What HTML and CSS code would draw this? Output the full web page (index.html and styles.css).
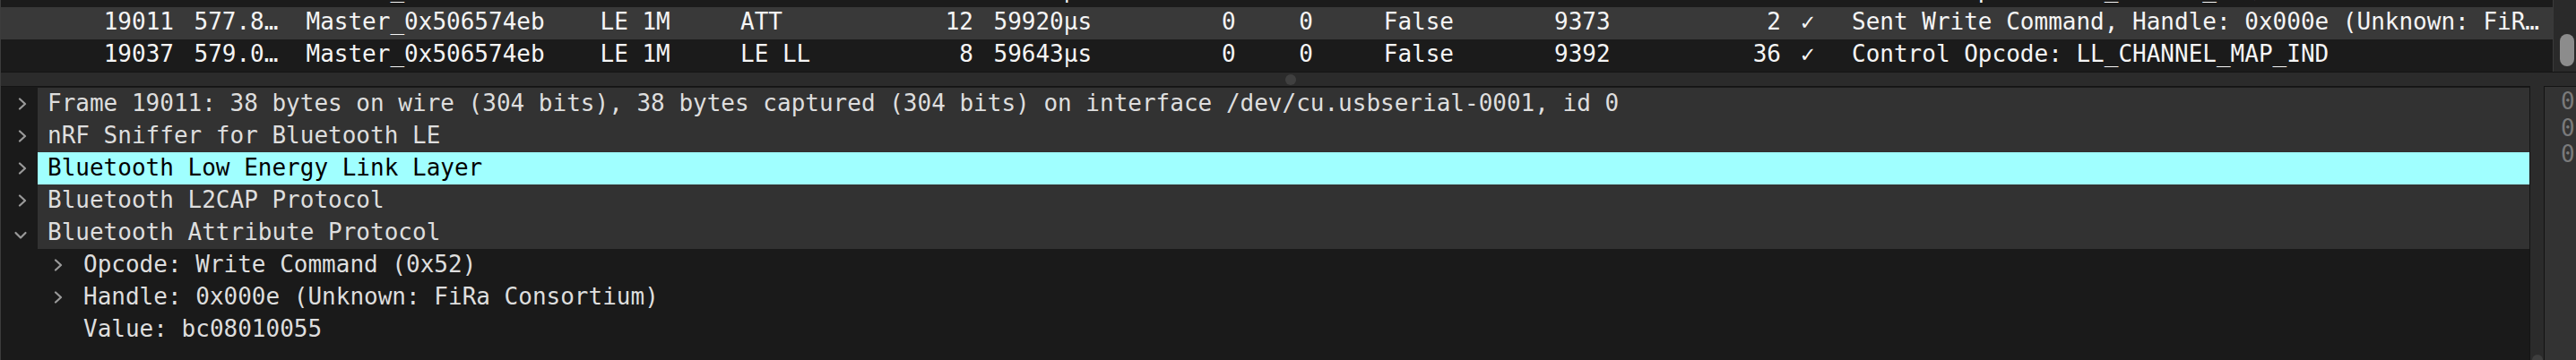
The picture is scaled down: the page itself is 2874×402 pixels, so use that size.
FILE: index.html
```html
<!DOCTYPE html>
<html>
<head>
<meta charset="utf-8">
<link rel="stylesheet" href="styles.css">
</head>
<body>
<div class="window">
  <div class="list">
    <div class="rows">
      <div class="row">
        <span class="c-no">19018</span><span class="c-time">578.3…</span><span class="c-src">Master_0x506574eb</span><span class="c-phy">LE 1M</span><span class="c-proto">LE LL</span><span class="c-len">2</span><span class="c-delta">59981µs</span><span class="c-a">0</span><span class="c-b">0</span><span class="c-bool">False</span><span class="c-ev">9380</span><span class="c-cnt">1</span><span class="c-ok">✓</span><span class="c-info">Control Opcode: LL_LENGTH_REQ</span>
      </div>
      <div class="row alt">
        <span class="c-no">19011</span><span class="c-time">577.8…</span><span class="c-src">Master_0x506574eb</span><span class="c-phy">LE 1M</span><span class="c-proto">ATT</span><span class="c-len">12</span><span class="c-delta">59920µs</span><span class="c-a">0</span><span class="c-b">0</span><span class="c-bool">False</span><span class="c-ev">9373</span><span class="c-cnt">2</span><span class="c-ok">✓</span><span class="c-info">Sent Write Command, Handle: 0x000e (Unknown: FiR…</span>
      </div>
      <div class="row">
        <span class="c-no">19037</span><span class="c-time">579.0…</span><span class="c-src">Master_0x506574eb</span><span class="c-phy">LE 1M</span><span class="c-proto">LE LL</span><span class="c-len">8</span><span class="c-delta">59643µs</span><span class="c-a">0</span><span class="c-b">0</span><span class="c-bool">False</span><span class="c-ev">9392</span><span class="c-cnt">36</span><span class="c-ok">✓</span><span class="c-info">Control Opcode: LL_CHANNEL_MAP_IND</span>
      </div>
    </div>
    <div class="vscroll"><div class="thumb"></div></div>
  </div>

  <div class="hsplit"><span class="knob"></span></div>

  <div class="bottom">
    <div class="tree">
      <div class="node">
        <span class="twisty"><svg class="chev" viewBox="0 0 10 14" width="10" height="14"><polyline points="2,1.5 8,7 2,12.5"/></svg></span>
        <span class="label">Frame 19011: 38 bytes on wire (304 bits), 38 bytes captured (304 bits) on interface /dev/cu.usbserial-0001, id 0</span>
      </div>
      <div class="node">
        <span class="twisty"><svg class="chev" viewBox="0 0 10 14" width="10" height="14"><polyline points="2,1.5 8,7 2,12.5"/></svg></span>
        <span class="label">nRF Sniffer for Bluetooth LE</span>
      </div>
      <div class="node sel">
        <span class="twisty"><svg class="chev" viewBox="0 0 10 14" width="10" height="14"><polyline points="2,1.5 8,7 2,12.5"/></svg></span>
        <span class="label">Bluetooth Low Energy Link Layer</span>
      </div>
      <div class="node">
        <span class="twisty"><svg class="chev" viewBox="0 0 10 14" width="10" height="14"><polyline points="2,1.5 8,7 2,12.5"/></svg></span>
        <span class="label">Bluetooth L2CAP Protocol</span>
      </div>
      <div class="node">
        <span class="twisty open"><svg class="chev" viewBox="0 0 16 10" width="16" height="10"><polyline points="2.5,2 8,7.5 13.5,2"/></svg></span>
        <span class="label">Bluetooth Attribute Protocol</span>
      </div>
      <div class="node child">
        <span class="twisty"><svg class="chev" viewBox="0 0 10 14" width="10" height="14"><polyline points="2,1.5 8,7 2,12.5"/></svg></span>
        <span class="label">Opcode: Write Command (0x52)</span>
      </div>
      <div class="node child">
        <span class="twisty"><svg class="chev" viewBox="0 0 10 14" width="10" height="14"><polyline points="2,1.5 8,7 2,12.5"/></svg></span>
        <span class="label">Handle: 0x000e (Unknown: FiRa Consortium)</span>
      </div>
      <div class="node child">
        <span class="twisty"></span>
        <span class="label">Value: bc08010055</span>
      </div>
    </div>
    <div class="vsplit"><span class="knob"></span></div>
    <div class="hex">
      <div class="hexline">0000  6f 13 00 00</div>
      <div class="hexline">0010  00 0e 00 52</div>
      <div class="hexline">0020  00 55 8b 1c</div>
    </div>
  </div>
</div>
</body>
</html>
```

FILE: styles.css
```css
html, body {
  margin: 0;
  padding: 0;
}

body {
  width: 2874px;
  height: 402px;
  overflow: hidden;
  background: #1a1a1a;
  font-family: "DejaVu Sans Mono", "Liberation Mono", monospace;
  font-size: 26px;
}

.window {
  height: 402px;
  border-left: 1px solid #3c3c3c;
  display: flex;
  flex-direction: column;
}

/* packet list */
.list {
  height: 80px;
  flex: none;
  display: flex;
}

.rows {
  flex: 1;
  min-width: 0;
  display: flex;
  flex-direction: column;
  justify-content: flex-end;
  overflow: hidden;
}

.row {
  flex: none;
  height: 36px;
  line-height: 32px;
  padding-bottom: 4px;
  box-sizing: border-box;
  display: flex;
  white-space: nowrap;
  color: #f5f5f5;
  background: #1b1b1b;
}

.row.alt {
  background: #393939;
}

.row span {
  flex: none;
  box-sizing: border-box;
  overflow: hidden;
}

.c-no { width: 193px; text-align: right; }
.c-time { width: 147.5px; padding-left: 22.5px; }
.c-src { width: 328px; }
.c-phy { width: 156.5px; }
.c-proto { width: 174px; }
.c-len { width: 86px; text-align: right; }
.c-delta { width: 214px; padding-left: 22.5px; }
.c-a { width: 78.6px; text-align: right; }
.c-b { width: 86.4px; text-align: right; }
.c-bool { width: 269px; padding-left: 78.75px; }
.c-ev { width: 166px; }
.c-cnt { width: 87px; text-align: right; }
.c-ok { width: 79px; padding-left: 22px; }
.row .c-info { flex: 1; min-width: 0; }

.vscroll {
  width: 26px;
  flex: none;
  box-sizing: border-box;
  background: #2a2a2a;
  border-left: 1px solid #3a3a3a;
  display: flex;
  flex-direction: column;
  justify-content: flex-end;
  padding: 0 2px 6px 7px;
}

.thumb {
  width: 16px;
  height: 36px;
  border-radius: 8px;
  background: #8c8c8c;
}

/* horizontal splitter */
.hsplit {
  height: 16px;
  flex: none;
  box-sizing: border-box;
  border-top: 1px solid #141414;
  background: #2b2b2b;
  display: flex;
  justify-content: center;
  align-items: center;
}

.hsplit .knob {
  width: 12px;
  height: 12px;
  border-radius: 50%;
  background: #404040;
  margin-left: 5px;
}

/* bottom panes */
.bottom {
  flex: 1;
  min-height: 0;
  display: flex;
}

.tree {
  width: 2822px;
  flex: none;
  box-sizing: border-box;
  border-top: 1px solid #141414;
  border-right: 1px solid #141414;
  padding-top: 1px;
  background: #1a1a1a;
  overflow: hidden;
}

.node {
  display: flex;
  height: 36px;
  line-height: 34px;
  white-space: nowrap;
}

.twisty {
  width: 41px;
  flex: none;
  box-sizing: border-box;
  padding-left: 19px;
  display: flex;
  align-items: center;
}

.twisty.open {
  padding-left: 14px;
  padding-top: 6px;
}

.chev polyline {
  fill: none;
  stroke: #9a9a9a;
  stroke-width: 2.2;
  stroke-linecap: round;
  stroke-linejoin: round;
}

.label {
  flex: 1;
  min-width: 0;
  padding-left: 11px;
  background: #323232;
  color: #dedede;
  overflow: hidden;
}

.node.sel .label {
  background: #a0ffff;
  color: #000000;
}

.node.child {
  padding-left: 40px;
}

.node.child .label {
  background: transparent;
}

.vsplit {
  width: 15px;
  flex: none;
  background: #2b2b2b;
  display: flex;
  flex-direction: column;
  justify-content: flex-end;
  align-items: center;
}

.vsplit .knob {
  width: 12px;
  height: 12px;
  border-radius: 50%;
  background: #3e3e3e;
  margin-bottom: -6px;
}

.hex {
  flex: 1;
  min-width: 0;
  box-sizing: border-box;
  border-top: 1px solid #141414;
  border-left: 1px solid #141414;
  background: #333333;
  padding: 2px 0 0 18px;
  color: #7a7a7a;
  line-height: 29.5px;
  white-space: nowrap;
  overflow: hidden;
}
```
